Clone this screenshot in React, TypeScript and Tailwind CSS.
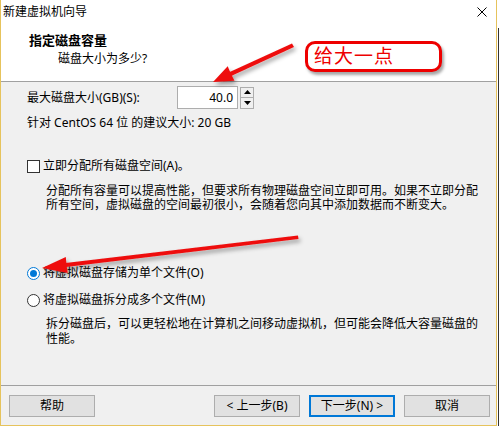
import React from "react";

const font = { fontFamily: '"Noto Sans", "Noto Sans CJK SC", "Liberation Sans", sans-serif' };

function Btn({ children, def }: { children: React.ReactNode; def?: boolean }) {
  return (
    <div
      className={
        "w-[86px] h-[22px] flex items-center justify-center text-[12px] leading-none text-black bg-[#e1e1e1] " +
        (def ? "border-2 border-[#0078d7]" : "border border-[#adadad]")
      }
    >
      {children}
    </div>
  );
}

export default function App() {
  return (
    <div className="w-[500px] h-[428px] bg-white relative overflow-hidden text-black" style={font}>
      <div className="w-[497px] h-[426px] flex flex-col bg-[#f0f0f0] border-l border-r border-b border-[#e6c35c]">
        {/* title bar */}
        <div className="h-[24px] bg-white flex items-center justify-between pl-[2px] pr-[8px]">
          <span className="text-[12px] leading-none">新建虚拟机向导</span>
          <svg width="10" height="10" viewBox="0 0 10 10" className="mr-[1px]">
            <path d="M0.5 0.5 L9.5 9.5 M9.5 0.5 L0.5 9.5" stroke="#000" strokeWidth="1" />
          </svg>
        </div>
        {/* header */}
        <div className="h-[58px] bg-white border-b border-[#a0a0a0] flex flex-col pl-[28px] pt-[8px]">
          <span className="text-[13px] leading-[16px] font-bold">指定磁盘容量</span>
          <span className="text-[12px] leading-[16px] pl-[29px] mt-[3px]">磁盘大小为多少?</span>
        </div>
        {/* content */}
        <div className="flex-1 flex flex-col pl-[26px] pt-[4px] text-[12px]">
          <div className="flex items-center h-[23px]">
            <span className="w-[150px] leading-[16px]">最大磁盘大小(GB)(S):</span>
            <div className="w-[61px] h-[23px] bg-white border border-[#adadad] flex items-center justify-end pr-[4px] leading-none">
              40.0
            </div>
            <div className="ml-[2px] flex flex-col gap-0">
              <div className="w-[14px] h-[11px] border border-[#adadad] bg-[#f0f0f0] flex items-center justify-center">
                <svg width="7" height="4" viewBox="0 0 7 4"><path d="M3.5 0 L7 4 L0 4 Z" fill="#000" /></svg>
              </div>
              <div className="w-[14px] h-[11px] border border-t-0 border-[#adadad] bg-[#f0f0f0] flex items-center justify-center">
                <svg width="7" height="4" viewBox="0 0 7 4"><path d="M0 0 L7 0 L3.5 4 Z" fill="#000" /></svg>
              </div>
            </div>
          </div>
          <div className="mt-[6px] leading-[16px]">针对 CentOS 64 位 的建议大小: 20 GB</div>

          <div className="mt-[27px] flex items-center h-[16px]">
            <div className="w-[13px] h-[13px] border border-[#333] bg-white" />
            <span className="ml-[3px] leading-[16px]">立即分配所有磁盘空间(A)。</span>
          </div>
          <div className="mt-[10px] pl-[19px] leading-[14px] w-[460px]">
            分配所有容量可以提高性能，但要求所有物理磁盘空间立即可用。如果不立即分配所有空间，虚拟磁盘的空间最初很小，会随着您向其中添加数据而不断变大。
          </div>

          <div className="mt-[53px] flex items-center h-[16px]">
            <div className="w-[13px] h-[13px] rounded-full border border-[#0078d7] bg-white flex items-center justify-center">
              <div className="w-[7px] h-[7px] rounded-full bg-[#0078d7]" />
            </div>
            <span className="ml-[3px] leading-[16px]">将虚拟磁盘存储为单个文件(O)</span>
          </div>
          <div className="mt-[11px] flex items-center h-[16px]">
            <div className="w-[13px] h-[13px] rounded-full border border-[#333] bg-white" />
            <span className="ml-[3px] leading-[16px]">将虚拟磁盘拆分成多个文件(M)</span>
          </div>
          <div className="mt-[8px] pl-[19px] leading-[15px] w-[460px]">
            拆分磁盘后，可以更轻松地在计算机之间移动虚拟机，但可能会降低大容量磁盘的性能。
          </div>
        </div>
        {/* footer */}
        <div className="h-[40px] border-t border-[#a0a0a0] flex items-start pt-[9px] pl-[8px]">
          <Btn>帮助</Btn>
          <div className="ml-[119px]">
            <Btn>&lt; 上一步(B)</Btn>
          </div>
          <div className="ml-[9px]">
            <Btn def>下一步(N) &gt;</Btn>
          </div>
          <div className="ml-[9px]">
            <Btn>取消</Btn>
          </div>
        </div>
      </div>
      <div className="absolute right-[1px] top-[28px] w-[1px] h-[398px] bg-[#333]" />

      {/* annotations */}
      <svg className="absolute left-0 top-0 pointer-events-none" width="500" height="428" viewBox="0 0 500 428">
        <defs>
          <filter id="sh" x="-20%" y="-20%" width="140%" height="160%">
            <feDropShadow dx="2" dy="3" stdDeviation="2" floodColor="#000" floodOpacity="0.35" />
          </filter>
        </defs>
        <g filter="url(#sh)" fill="#ee1111" stroke="none">
          <path d="M292 43.5 L294 47 L229 77 L227.5 73 Z" />
          <path d="M213 82 L227.7 66.3 L231 74 L234.5 80.7 Z" />
          <path d="M298 235.5 L298.5 239 L66 267 L65.5 263 Z" />
          <path d="M42 268 L65.8 257.1 L66.5 265 L67.8 272.9 Z" />
        </g>
      </svg>
      <div className="absolute left-[305px] top-[41px] w-[137px] h-[31px] rounded-[10px] border-[3px] border-[#ee0000] bg-white shadow-[2px_3px_3px_rgba(0,0,0,0.35)] flex items-center pl-[6px]">
        <span className="text-[19px] leading-none tracking-[1px] text-[#ee0000]">给大一点</span>
      </div>
    </div>
  );
}
